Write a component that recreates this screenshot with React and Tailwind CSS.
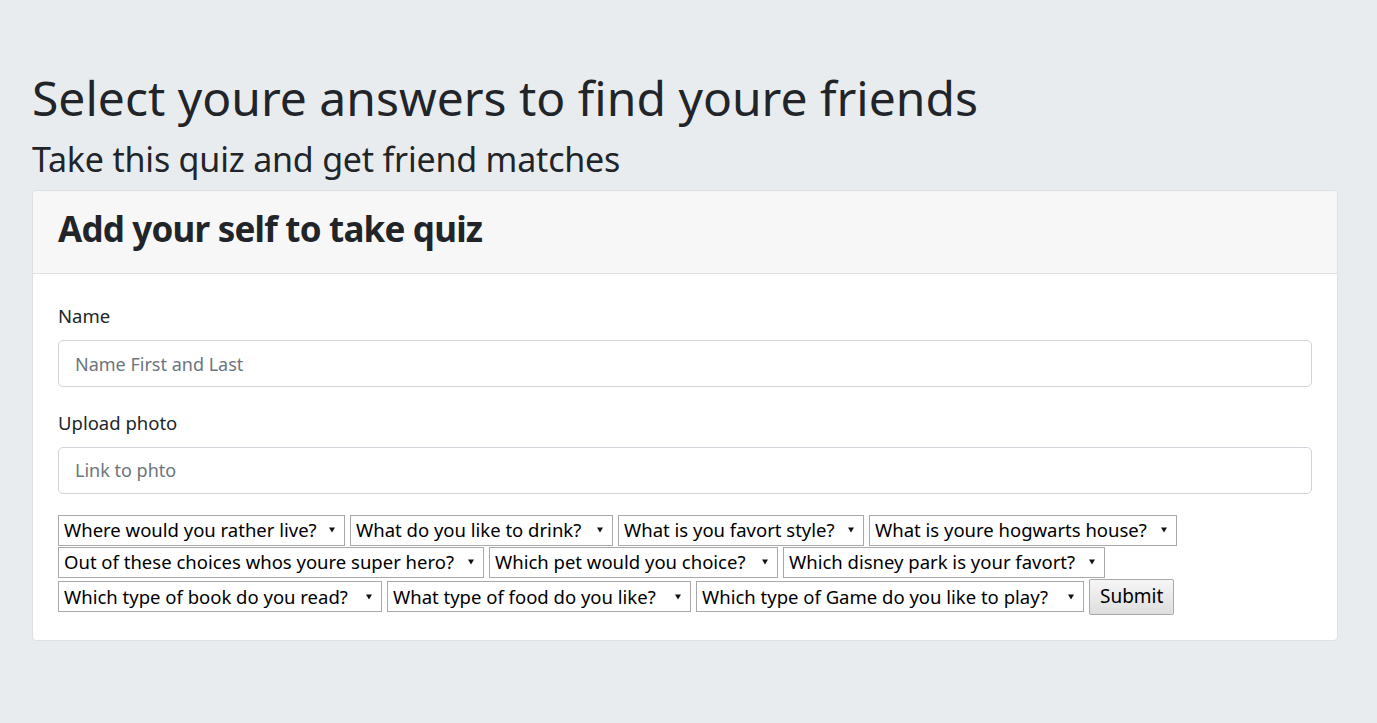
import React from "react";

const questions = [
  { q: "Where would you rather live?", w: "w-[287px]" },
  { q: "What do you like to drink?", w: "w-[263px]" },
  { q: "What is you favort style?", w: "w-[246px]" },
  { q: "What is youre hogwarts house?", w: "w-[308px]" },
  { q: "Out of these choices whos youre super hero?", w: "w-[426px]" },
  { q: "Which pet would you choice?", w: "w-[289px]" },
  { q: "Which disney park is your favort?", w: "w-[322px]" },
  { q: "Which type of book do you read?", w: "w-[324px]" },
  { q: "What type of food do you like?", w: "w-[304px]" },
  { q: "Which type of Game do you like to play?", w: "w-[388px]" },
];

const Caret = () => (
  <svg width="6" height="6" viewBox="0 0 6 6" className="shrink-0 ml-[5px]">
    <path d="M0 0.5 H6 L3 5.5 Z" fill="#111" />
  </svg>
);

const QuizSelect = ({ q, w }) => (
  <div
    className={`${w} h-[31px] flex items-center justify-between border border-[#a9a9a9] bg-white pl-[5px] pr-[9px] text-[18.5px] text-black`}
  >
    <span className="whitespace-nowrap leading-none">{q}</span>
    <Caret />
  </div>
);

export default function App() {
  return (
    <div
      className="min-h-screen bg-[#e9ecef] text-[#212529] pl-8 pr-[39px] pt-[69px] pb-16"
      style={{ fontFamily: '"Noto Sans", "Open Sans", sans-serif' }}
    >
      <h1 className="text-[48px] leading-[1.2] font-normal mb-[12px]">
        Select youre answers to find youre friends
      </h1>
      <h2 className="text-[34px] leading-[1.2] font-normal tracking-[-0.2px] mb-[11px]">
        Take this quiz and get friend matches
      </h2>

      <div className="bg-white border border-[#dfdfdf] rounded-[4px]">
        <div className="bg-[#f7f7f7] border-b border-[#dfdfdf] px-[25px] h-[83px] pt-[17px] rounded-t-[4px]">
          <h3 className="text-[35px] font-bold tracking-[-0.8px] leading-[1.2]">
            Add your self to take quiz
          </h3>
        </div>

        <div className="px-[25px] pt-[28px] pb-[25px]">
          <label className="block text-[18.5px] mb-[10px]">Name</label>
          <input
            type="text"
            placeholder="Name First and Last"
            className="w-full h-[47px] border border-[#ced4da] rounded-[5px] px-4 text-[18px] placeholder:text-[#6c757d] outline-none"
          />

          <label className="block text-[18.5px] mt-[22px] mb-[10px]">Upload photo</label>
          <input
            type="text"
            placeholder="Link to phto"
            className="w-full h-[47px] border border-[#ced4da] rounded-[5px] px-4 text-[18px] placeholder:text-[#6c757d] outline-none"
          />

          <div className="mt-[21px] flex flex-wrap items-center gap-x-[5px] gap-y-px">
            {questions.map((item) => (
              <QuizSelect key={item.q} q={item.q} w={item.w} />
            ))}
            <button className="h-[36px] px-[10px] border border-[#a9a9a9] rounded-[2px] bg-gradient-to-b from-[#f6f6f6] to-[#dedede] text-[19px] text-black leading-none">
              Submit
            </button>
          </div>
        </div>
      </div>
    </div>
  );
}
